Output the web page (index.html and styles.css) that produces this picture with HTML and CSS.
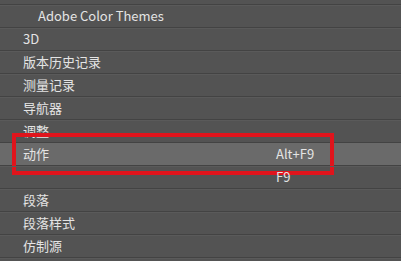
FILE: index.html
```html
<!DOCTYPE html>
<html lang="zh-CN">
<head>
    <meta charset="UTF-8">
    <title>窗口菜单</title>
    <link rel="stylesheet" href="styles.css">
</head>
<body>

<ul class="menu">
    <li class="menu-item stub"></li>
    <li class="menu-item sub"><span class="label">Adobe Color Themes</span></li>
    <li class="menu-item"><span class="label">3D</span></li>
    <li class="menu-item"><span class="label">版本历史记录</span></li>
    <li class="menu-item"><span class="label">测量记录</span></li>
    <li class="menu-item"><span class="label">导航器</span></li>
    <li class="menu-item"><span class="label">调整</span></li>
    <li class="menu-item active"><span class="label">动作</span><span class="key">Alt+F9</span></li>
    <li class="menu-item"><span class="label"></span><span class="key">F9</span></li>
    <li class="menu-item"><span class="label">段落</span></li>
    <li class="menu-item"><span class="label">段落样式</span></li>
    <li class="menu-item"><span class="label">仿制源</span></li>
    <li class="menu-item last"></li>
</ul>

</body>
</html>
```

FILE: styles.css
```css
* {
    margin: 0;
    padding: 0;
    box-sizing: border-box;
}

html, body {
    height: 261px;
    overflow: hidden;
}

body {
    background-color: #535353;
    font-family: "Noto Sans CJK SC", "Noto Sans", sans-serif;
    font-size: 13px;
    color: #e4e4e4;
}

.menu {
    list-style: none;
    display: flex;
    flex-direction: column;
}

.menu-item {
    position: relative;
    display: flex;
    align-items: center;
    height: 23px;
    padding-left: 23px;
    padding-bottom: 2px;
    border-bottom: 1px solid #434343;
    box-shadow: inset 0 1px 0 #5a5a5a;
}

.menu-item.stub {
    height: 5px;
    padding-bottom: 0;
    box-shadow: none;
}

.menu-item.last {
    height: 4px;
    border-bottom: none;
}

.menu-item.sub {
    padding-left: 38px;
}

.label {
    width: 253px;
    line-height: 1;
}

.key {
    line-height: 1;
}

.menu-item.active {
    background-color: #6a6a6a;
    box-shadow: none;
}

.menu-item.active::after {
    content: "";
    position: absolute;
    left: 12px;
    top: -10px;
    width: 314px;
    height: 34px;
    border: 4px solid #e0141c;
}
```
